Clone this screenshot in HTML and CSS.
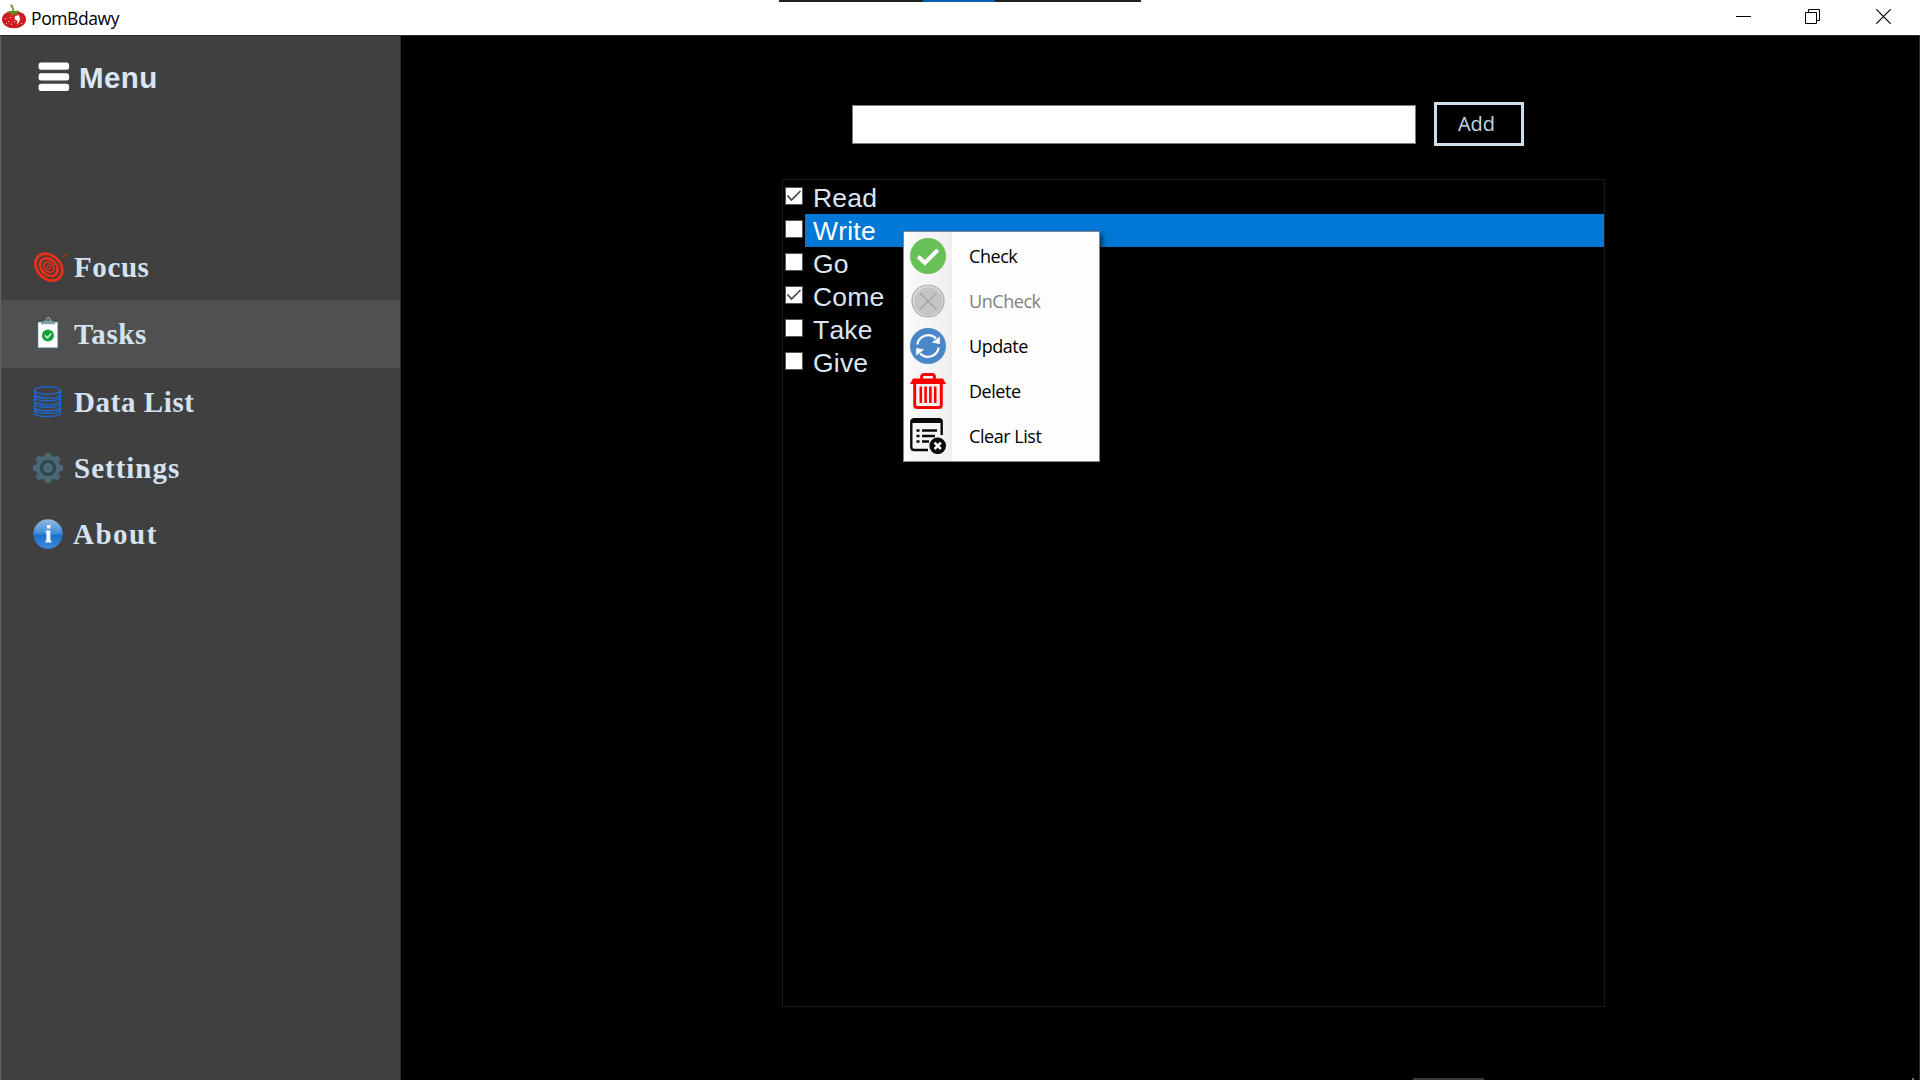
FILE: index.html
```html
<!DOCTYPE html>
<html lang="en">
<head>
<meta charset="utf-8">
<title>PomBdawy</title>
<link rel="stylesheet" href="styles.css">
</head>
<body>
<div class="window">
  <header class="titlebar">
    <svg class="logo" width="26" height="26" viewBox="0 0 26 26">
      <ellipse cx="13" cy="15.500" rx="12" ry="8.700" fill="#c8191c"/>
      <ellipse cx="13" cy="15" rx="9.500" ry="5.800" fill="#d32022"/>
      <path d="M5 8l5-1 1.500.5L11 4 9.500 2V.5H11l1.500 3 .5 3.500 5-.5-2 2 3 1.500-5-.3-3 2-1.500-2.500z" fill="#5f8f27"/>
      <path d="M14 12l4-1 1 4-1 3-2 3 .5-4-3-2z" fill="#fff"/>
      <path d="M4 14h1v1H4zM7 17h1v1H7zM5 19h1v1H5zM9 13h1v1H9zM10 20h1v1h-1zM13 17h1v1h-1zM20 19h1v1h-1z" fill="#fbd5d5"/>
    </svg>
    <span class="title">PomBdawy</span>
    <div class="controls">
      <svg width="15" height="15" viewBox="0 0 15 15"><path d="M0 7.500h15" stroke="#000"/></svg>
      <svg width="15" height="15" viewBox="0 0 15 15"><path d="M.5 3.500h11v11H.5zM3.500 3.500v-3h11v11h-3" fill="none" stroke="#000"/></svg>
      <svg width="15" height="15" viewBox="0 0 15 15"><path d="M.3.3l14.400 14.400M14.700.3L.3 14.700" stroke="#000" stroke-width="1.200"/></svg>
    </div>
    <div class="notch"><div class="notch-active"></div></div>
  </header>
  <div class="body">
    <nav class="sidebar">
      <div class="menu-head">
        <svg width="32" height="30" viewBox="0 0 32 30"><g fill="#fff"><rect x=".6" y=".6" width="30.500" height="7.200" rx="2.500"/><rect x=".6" y="11.300" width="30.500" height="7.200" rx="2.500"/><rect x=".6" y="21.800" width="30.500" height="7.200" rx="2.500"/></g></svg>
        <span>Menu</span>
      </div>
      <div class="nav-item focus">
        <svg width="34" height="34" viewBox="0 0 34 34">
          <g transform="rotate(45 15.500 17.500)" fill="none" stroke="#e5301c">
            <ellipse cx="15.500" cy="18.300" rx="15.500" ry="12" fill="#a91d10" stroke="none"/>
            <ellipse cx="15.500" cy="17" rx="15" ry="11.500" fill="#4a3b38" stroke-width="2.900"/>
            <ellipse cx="15.500" cy="17" rx="10" ry="7.500" stroke-width="2.700"/>
            <ellipse cx="15.500" cy="17" rx="5.700" ry="4.300" stroke-width="1.800"/>
            <ellipse cx="15.500" cy="17" rx="2" ry="1.500" stroke-width="1.400"/>
          </g>
          <path d="M29 7l3-3 2 1-2 2z" fill="#b82b1d"/>
        </svg>
        <span>Focus</span>
      </div>
      <div class="nav-item tasks active">
        <svg width="34" height="34" viewBox="0 0 34 34">
          <rect x="3" y="5" width="22.500" height="28.500" rx="1.500" fill="#3f626b"/>
          <rect x="4.300" y="6" width="20" height="26" fill="#fff"/>
          <path d="M7 8q0-3 5-4 .3-3.500 2.700-3.500T17.500 4q4.500 1 4.500 4z" fill="#84a0a8"/>
          <circle cx="14.600" cy="3.300" r="1.300" fill="#505050"/>
          <circle cx="14.400" cy="19.600" r="6.200" fill="#14a33a"/>
          <path d="M11.300 19.500l2.500 2.500 4-4.500" fill="none" stroke="#c6efcf" stroke-width="1.700"/>
        </svg>
        <span>Tasks</span>
      </div>
      <div class="nav-item data">
        <svg width="34" height="34" viewBox="0 0 34 34">
          <g fill="none" stroke="#1b68cf" stroke-width="1.400">
            <ellipse cx="14.500" cy="5.500" rx="12.800" ry="3.800"/>
            <path d="M1.700 5.500v22.300c0 5 25.600 5 25.600 0V5.500M1.700 9.500c0 5 25.600 5 25.600 0M1.700 12c0 5 25.600 5 25.600 0M1.700 16c0 5 25.600 5 25.600 0M1.700 18.500c0 5 25.600 5 25.600 0M1.700 22c0 5 25.600 5 25.600 0M1.700 24.500c0 5 25.600 5 25.600 0"/>
            <path d="M4 11l9 2M4 17.500l9 2M4 24l9 2" stroke-width=".8"/>
          </g>
        </svg>
        <span>Data List</span>
      </div>
      <div class="nav-item settings">
        <svg width="34" height="34" viewBox="-15 -17 34 34">
          <g fill="#4b6874"><circle r="12.400"/>
            <g id="teeth"><rect x="-3" y="-15" width="6" height="30" rx="1"/><rect x="-15" y="-3" width="30" height="6" rx="1"/></g>
            <use href="#teeth" transform="rotate(45)"/>
          </g>
          <circle r="8.200" fill="#2e4850"/><circle r="4.900" fill="#4b6874"/>
        </svg>
        <span>Settings</span>
      </div>
      <div class="nav-item about">
        <svg width="34" height="34" viewBox="-15 -17 34 34">
          <defs><linearGradient id="blue" x1="0" y1="0" x2="0" y2="1"><stop offset="0" stop-color="#93bce6"/><stop offset=".48" stop-color="#3e8ad6"/><stop offset=".55" stop-color="#1c6fc9"/><stop offset="1" stop-color="#3d8ade"/></linearGradient></defs>
          <circle r="14.700" fill="url(#blue)"/>
          <path d="M-1-9h3.500v3.600H-1zM-2.300-3.500h4.700V6.500h1V8.500h-6V6.500h1V-1.500h-.7z" fill="#f3f8fd"/>
        </svg>
        <span>About</span>
      </div>
    </nav>
    <main class="main">
      <div class="entry">
        <input class="entry-input" type="text">
        <button class="add">Add</button>
      </div>
      <div class="list">
        <div class="row"><span class="box"><svg width="16" height="16" viewBox="0 0 16 16"><path d="M1.500 7.500l4 4.500 9-9" fill="none" stroke="#444" stroke-width="1.700"/></svg></span><span class="label">Read</span></div>
        <div class="row selected"><span class="box"></span><span class="label">Write</span></div>
        <div class="row"><span class="box"></span><span class="label">Go</span></div>
        <div class="row"><span class="box"><svg width="16" height="16" viewBox="0 0 16 16"><path d="M1.500 7.500l4 4.500 9-9" fill="none" stroke="#444" stroke-width="1.700"/></svg></span><span class="label">Come</span></div>
        <div class="row"><span class="box"></span><span class="label">Take</span></div>
        <div class="row"><span class="box"></span><span class="label">Give</span></div>
        <div class="context">
          <div class="option">
            <svg width="36" height="36" viewBox="0 0 36 36"><circle cx="18" cy="18" r="18" fill="#67c157"/><path d="M8.300 18.500l6.500 6.500L27.800 12" fill="none" stroke="#fff" stroke-width="4"/></svg>
            <span>Check</span>
          </div>
          <div class="option disabled">
            <svg width="36" height="36" viewBox="0 0 36 36"><circle cx="18" cy="18" r="16" fill="#ddd" stroke="#aaa" stroke-width="1.200"/><circle cx="18.300" cy="18.500" r="14.200" fill="#c5c5c5"/><path d="M10 10l16.500 16.500M26.500 10L10 26.500" stroke="#a3a3a3" stroke-width="1.500"/></svg>
            <span>UnCheck</span>
          </div>
          <div class="option">
            <svg width="36" height="36" viewBox="0 0 36 36"><circle cx="18" cy="18" r="18" fill="#4a87c9"/><g fill="none" stroke="#fff" stroke-width="2.200"><path d="M7.300 16.500A11 11 0 0 1 26 10.500"/><path d="M28.700 19.500A11 11 0 0 1 10 25.500"/></g><path d="M29.800 8.500v7.500l-8-1.500zM6.200 27.500v-7.500l8 1.500z" fill="#fff"/></svg>
            <span>Update</span>
          </div>
          <div class="option">
            <svg width="36" height="36" viewBox="0 0 36 36"><g fill="none" stroke="#fe0000"><path d="M11.500 6V4Q11.500 1.500 14 1.500h8Q24.500 1.500 24.500 4v2" stroke-width="2.800"/><path d="M4.700 9v23q0 2.500 2.500 2.500h21.600q2.500 0 2.500-2.500V9" stroke-width="3"/><path d="M10.800 13.500v16.500M15.600 13.500v16.500M20.400 13.500v16.500M25.200 13.500v16.500" stroke-width="2.600"/></g><path d="M3 5.500h30l3 5.500H0z" fill="#fe0000"/></svg>
            <span>Delete</span>
          </div>
          <div class="option">
            <svg width="36" height="36" viewBox="0 0 36 36"><path d="M18 32H4Q1.300 32 1.300 29V4Q1.300 1.500 4 1.500h25q2.700 0 2.700 2.500v13" fill="none" stroke="#090909" stroke-width="2.400"/><path d="M1 5V4q0-4 4-4h23.500q4 0 4 4v1z" fill="#090909"/><path d="M6.500 12.500h3M6.500 18h3M6.500 23.500h3M12 12.500h15M12 18h13M12 23.500h7" stroke="#090909" stroke-width="2.700"/><circle cx="27.700" cy="27.800" r="8.300" fill="#090909"/><path d="M24.500 24.600l6.400 6.400M30.900 24.600L24.500 31" stroke="#fff" stroke-width="2.500"/></svg>
            <span>Clear List</span>
          </div>
        </div>
      </div>
    </main>
  </div>
  <div class="bottom-tab"></div>
  <div class="bottom-dot"></div>
</div>
</body>
</html>
```
FILE: styles.css
```css
* { box-sizing: border-box; }
body { margin: 0; background: #000; }
svg { display: block; flex: none; }

.window {
  position: relative;
  width: 1920px;
  height: 1080px;
  display: flex;
  flex-direction: column;
  overflow: hidden;
}

.titlebar {
  position: relative;
  height: 35px;
  display: flex;
  align-items: center;
  background: #fff;
  padding: 0 12px 0 1px;
}
.logo { margin-top: -2px; }
.title {
  margin-left: 4px;
  font: 17.5px/24px "Open Sans", sans-serif;
  letter-spacing: -0.4px;
  color: #000;
}
.controls {
  display: flex;
  gap: 54px;
  margin: -2px 17px 0 auto;
}
.controls svg:last-child { margin-left: 2px; }
.notch {
  position: absolute;
  left: 779px;
  top: 0;
  width: 362px;
  height: 2px;
  background: #201f20;
  padding-left: 144px;
}
.notch-active { width: 72px; height: 2px; background: #0063b1; }

.body {
  flex: 1;
  display: flex;
  border: 1px solid #2b2b2b;
  border-width: 1px 1px 0 0;
}

.sidebar {
  width: 401px;
  background: #404040;
  border-left: 1px solid #616161;
  border-right: 1px solid #2a2a2a;
}
.menu-head {
  height: 197px;
  display: flex;
  gap: 9px;
  padding: 26px 0 0 37px;
  font: bold 29.5px/32px "Liberation Sans", sans-serif;
  letter-spacing: 0.4px;
  color: #d9e6f4;
}
.nav-item {
  height: 67px;
  display: flex;
  align-items: center;
  gap: 7px;
  padding-left: 32px;
  font: bold 29px/34px "Liberation Serif", serif;
  letter-spacing: 0.6px;
  color: #d5e3f1;
}
.tasks { height: 68px; }
.active { background: #505050; }
.settings { height: 66px; letter-spacing: 1px; }
.about { height: 65px; letter-spacing: 1.5px; }
.about span { margin-left: -1px; }
.active svg { margin: -3px 0 0 1px; width: 33px; }

.main { flex: 1; padding: 66px 0 0 381px; }
.entry {
  display: flex;
  align-items: center;
  gap: 18px;
  height: 45px;
  padding-left: 70px;
}
.entry-input {
  width: 564px;
  height: 39px;
  background: #fff;
  border: 1px solid #7a7a7a;
  border-radius: 0;
  outline: none;
  padding: 0 6px;
}
.add {
  width: 90px;
  height: 44px;
  margin-bottom: 1px;
  background: #000;
  border: 3px solid #d0dfee;
  color: #c5d8e8;
  font: 20px/24px "Open Sans", sans-serif;
  padding: 0 5px 0 0;
}

.list {
  position: relative;
  width: 823px;
  height: 828px;
  margin-top: 32px;
  border: 1px solid #191919;
  padding-top: 1px;
}
.row {
  height: 33px;
  display: flex;
  padding-left: 2px;
  font: 26.5px/35px "Liberation Sans", sans-serif;
  font-kerning: none;
  letter-spacing: 0.2px;
  color: #d9e6f4;
}
.box {
  width: 18px;
  height: 18px;
  margin: 6px 2px 0 0;
  background: #fff;
  border: 1px solid #555;
}
.label { flex: 1; padding-left: 8px; }
.selected .label { background: #0078d7; color: #fff; }

.context {
  position: absolute;
  left: 120px;
  top: 51px;
  width: 197px;
  height: 231px;
  padding: 1px 0;
  border: 1px solid #858585;
  background: linear-gradient(90deg, #fdfdfd 4px, #f9f9f9 5px, #efefef 48px, #fdfdfd 48px);
  box-shadow: 3px 3px 4px rgba(0, 0, 0, 0.5);
}
.option {
  height: 45px;
  display: flex;
  align-items: center;
  gap: 23px;
  padding-left: 6px;
  font: 18px/24px "Open Sans", sans-serif;
  letter-spacing: -0.45px;
  color: #000;
}
.disabled { color: #808080; }

.bottom-tab {
  position: absolute;
  left: 1413px;
  top: 1078px;
  width: 71px;
  height: 2px;
  background: #3a3a3a;
}
.bottom-dot {
  position: absolute;
  left: 1912px;
  top: 1078px;
  width: 2px;
  height: 2px;
  background: #777;
}
```
